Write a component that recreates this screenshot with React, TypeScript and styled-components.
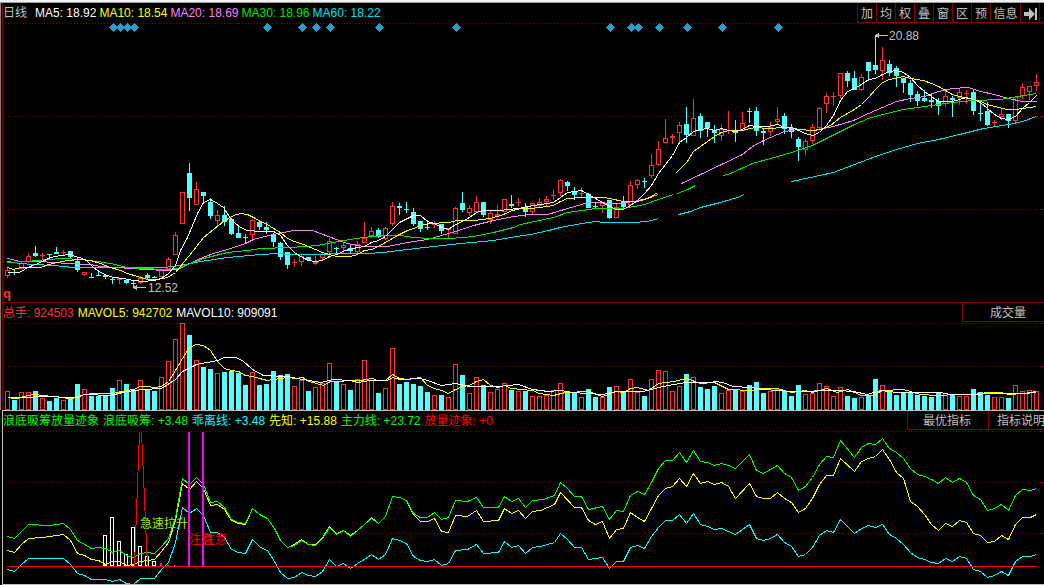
import React from 'react';
import styled, { createGlobalStyle } from 'styled-components';

const C = {
  up: '#ff3232',
  down: '#54ffff',
  frame: '#800000',
  text: '#c0c0c0',
  white: '#ffffff',
  yellow: '#ffff00',
  pink: '#ff80ff',
  green: '#00e600',
  aqua: '#00e1f0',
  lime: '#00ff00',
  cyan: '#00ffff',
  red: '#ff0000',
  magenta: '#ff00ff',
  diamond: '#2d9bc8',
};

const GlobalStyle = createGlobalStyle`
  * { box-sizing: border-box; }
  body {
    margin: 0;
    background: #000;
    color: ${C.text};
    font: 12px/20px "Liberation Sans", "Noto Sans CJK SC", sans-serif;
    overflow-x: hidden;
  }
`;

/* kind, high, body top, body bottom, low, volume top; one entry per trading day */
const DAYS = `
r 267 270 276 278 391|c 270 272 273 275 400|r 262 263 269 269 392|r 253 256 262 263 392|c 246 253 256 257 391
r 253 255 256 259 398|c 254 254 255 258 401|c 247 252 254 254 398|r 250 252 253 255 400|c 251 251 257 258 398
c 257 261 270 272 384|r 272 272 275 276 389|c 273 277 278 278 396|c 271 275 276 276 396|c 274 275 277 279 396
c 278 279 280 284 388|r 278 278 280 284 380|c 280 280 283 284 384|c 281 283 284 288 390|r 276 278 283 284 380
c 273 275 278 279 389|c 276 277 278 278 391|r 269 269 277 279 377|r 257 259 269 271 361|r 232 235 255 255 339
r 192 192 224 224 323|c 163 173 198 211 335|r 182 189 205 205 360|c 192 192 196 202 367|c 198 202 216 219 369
r 210 215 221 227 373|c 206 215 222 226 372|c 218 219 234 235 371|c 225 233 238 238 373|c 234 237 238 243 385
r 219 220 235 239 372|c 220 222 227 230 385|c 222 227 230 234 384|c 233 235 242 247 371|c 242 243 257 260 375
c 252 252 265 269 374|r 259 262 263 267 386|r 254 256 262 266 380|c 257 257 260 260 391|r 256 262 264 265 387
r 252 254 258 260 383|r 238 241 252 258 363|c 247 248 249 254 382|r 242 245 248 253 384|c 245 248 251 254 390
r 241 244 252 254 379|r 222 238 243 243 360|r 227 231 236 238 380|c 228 230 237 238 393|r 227 228 239 240 388
r 202 206 224 226 348|c 203 206 208 215 384|c 202 209 210 213 382|c 208 212 224 226 384|c 221 221 229 232 386
c 220 227 228 230 392|r 221 224 225 228 395|c 224 224 231 234 395|r 228 228 230 238 397|r 207 208 234 234 364
c 192 203 210 212 375|r 205 208 213 216 393|r 196 202 212 212 377|c 202 202 215 217 385|r 211 213 220 224 392
r 205 214 216 217 389|r 199 199 212 212 383|c 195 204 206 208 390|r 198 202 203 206 391|c 203 207 212 217 391
r 203 203 212 214 396|r 198 202 206 208 396|r 196 199 202 206 395|r 190 195 196 200 390|r 179 180 193 196 383
c 181 182 186 191 392|c 187 191 195 200 392|r 187 193 194 198 397|c 193 194 208 208 389|c 202 206 207 208 397
r 202 203 206 213 397|c 200 200 218 219 387|r 204 207 218 218 386|c 196 202 207 208 391|r 181 185 205 206 379
r 179 180 185 189 392|c 178 181 182 188 396|r 154 165 176 178 379|r 141 149 165 166 370|r 119 138 143 143 371
r 134 136 138 144 391|r 122 125 133 142 386|c 107 124 135 143 374|r 99 118 136 136 377|c 113 116 131 138 387
c 122 122 128 137 389|c 125 130 133 143 386|r 124 129 136 141 393|r 111 130 131 134 390|c 120 131 133 142 390
r 112 123 131 131 391|c 108 111 112 123 385|c 107 111 131 136 382|c 128 131 133 145 393|r 122 127 132 136 391
r 107 119 122 124 389|c 113 116 129 134 391|c 124 128 132 138 396|c 137 139 147 161 385|r 139 141 150 155 394
r 124 127 141 144 393|r 107 108 128 129 383|r 93 96 104 113 386|r 92 96 97 106 396|r 73 73 96 98 387
c 71 73 81 87 396|c 71 78 90 90 398|r 74 77 90 91 397|c 62 62 71 81 395|c 35 65 70 74 379
r 47 60 71 80 385|c 60 64 73 76 391|c 66 68 76 87 395|c 78 78 83 93 393|c 80 83 95 102 393
c 91 94 101 106 395|c 90 98 101 102 396|c 95 100 102 108 397|c 98 101 106 115 393|r 89 96 104 107 393
c 96 98 100 117 395|r 88 92 98 105 396|r 90 93 94 104 396|c 89 92 111 115 389|c 103 113 114 121 392
c 102 111 125 126 395|r 120 122 123 127 397|r 108 114 117 120 397|c 114 114 121 128 398|r 96 97 121 122 385
r 83 87 96 99 391|r 86 86 92 100 390|r 74 82 86 91 391`
  .trim()
  .split(/[|\n]/)
  .map((row, i) => {
    const [kind, ...v] = row.trim().split(' ');
    const [high, top, bottom, low, volume] = v.map(Number);
    return { x: 7 + 7 * i, up: kind === 'r', high, top, bottom, low, volume };
  });

const PRICE_LINES: [string, string][] = [
  [C.aqua, '7,261 20,263 33,264 53,265 73,267 100,267 163,267 180,265 200,261 227,257 260,254 277,253 290,254 367,253 383,252 407,249 433,246 460,243 493,240 510,237 530,234 548,230 560,227 581,223 595,221 603,222 632,222 647,221 658,218'],
  [C.aqua, '678,214 690,211 700,207 720,202 737,197 744,194'],
  [C.aqua, '791,181 810,177 833,172 854,164 875,156 896,149 917,143 938,139 959,134 983,128 1008,124 1022,121 1036,116'],
  [C.pink, '7,258 20,261 40,261 53,262 67,263 90,264 100,266 113,267 133,268 143,269 167,270 177,269 187,264 200,258 213,253 227,249 245,243 253,239 260,237 273,234 293,230 312,230 320,233 336,239 347,243 363,246 387,246 407,242 427,239 455,231 473,225 493,220 513,216 530,214 547,214 567,208 581,204 588,202 620,203 633,201 647,198 658,194'],
  [C.pink, '681,183 700,174 721,164 742,154 752,146 763,140 777,134 784,131 798,129 813,130 833,126 853,120 868,113 882,107 896,101 910,98 924,96 938,91 952,88 968,87 980,91 994,94 1008,98 1022,101 1036,101'],
  [C.green, '7,262 27,261 47,259 63,258 80,259 97,261 110,263 127,267 140,268 167,269 177,268 187,264 203,258 227,252 247,250 260,248 290,247 317,245 343,240 363,237 383,235 400,235 413,237 427,238 450,238 473,236 493,232 513,227 520,224 553,217 567,212 595,208 623,208 644,204 658,199 673,194'],
  [C.green, '677,193 687,189 695,185'],
  [C.green, '723,175 730,173 752,163 770,158 791,152 812,145 826,138 840,131 854,124 868,118 882,114 903,109 924,106 952,102 973,100 1000,99 1017,96 1036,93'],
  [C.yellow, '7,267 13,269 20,267 40,267 48,264 57,262 67,260 80,259 90,260 100,263 110,267 120,270 127,273 137,276 147,279 157,279 167,277 175,272 183,262 193,250 203,237 213,229 223,221 233,215 240,213 247,214 253,217 260,221 267,224 273,228 280,232 287,238 294,241 303,244 315,249 322,252 329,254 336,256 350,256 357,254 364,250 371,249 378,246 385,242 392,238 399,234 407,230 413,228 420,225 430,223 448,222 457,220 473,220 490,218 503,214 512,210 520,208 530,208 547,206 553,205 560,201 567,198 581,197 603,197 609,198 623,201 637,201 647,198 651,196 657,192'],
  [C.yellow, '675,173 687,161 693,151 700,146 707,141 714,136 721,132 728,130 742,130 749,128 756,127 767,128 784,127 791,127 798,129 813,130 820,129 830,125 840,117 847,113 854,109 861,104 868,97 875,89 882,82 889,79 903,76 910,78 923,80 931,83 938,86 945,90 952,94 959,96 973,99 980,101 987,104 994,106 1007,109 1015,109 1022,108 1036,106'],
  [C.white, '7,272 18,272 21,271 27,267 35,264 42,261 50,257 60,255 70,254 75,256 82,258 87,261 93,267 100,272 107,275 113,277 123,278 133,280 143,281 153,280 161,278 168,273 175,265 180,250 187,237 197,213 203,202 210,199 217,203 223,207 230,218 235,223 240,227 247,230 260,231 273,231 280,235 287,245 294,252 302,257 308,260 315,261 322,260 329,256 336,254 345,250 357,247 364,246 371,242 378,240 385,236 392,229 399,222 407,218 413,215 420,215 427,221 434,223 441,227 448,229 455,224 462,221 469,217 476,212 483,210 500,210 508,209 518,208 527,206 540,204 553,202 560,197 567,192 574,191 581,190 588,194 595,198 602,202 609,206 616,209 623,209 630,205 637,200 644,193 651,185 658,173 665,164 672,155 679,142 686,137 693,131 700,129 707,128 714,130 721,128 728,130 735,131 742,129 749,125 756,126 767,126 777,124 784,127 791,127 798,130 805,133 812,135 819,132 826,125 833,115 840,100 847,91 854,88 861,84 868,79 875,78 882,74 889,71 896,70 903,72 910,77 917,85 924,91 931,96 938,101 952,101 959,99 966,97 973,99 980,102 987,108 994,114 1001,118 1008,119 1015,116 1022,108 1029,102 1036,95'],
];

const VOLUME_LINES: [string, string][] = [
  [C.yellow, '10,398 17,398 27,395 35,394 42,395 63,397 70,399 77,396 84,394 93,393 112,393 126,390 133,389 140,386 147,386 154,387 161,386 168,381 175,370 182,358 189,347 196,344 203,345 210,350 217,361 224,368 231,370 238,371 245,375 252,376 259,378 267,380 273,379 287,377 295,378 302,377 309,381 316,383 323,385 330,381 337,381 350,380 360,380 372,378 377,380 385,380 392,374 399,378 407,379 420,377 427,385 434,388 441,390 448,393 455,389 462,386 469,385 476,381 483,379 490,385 498,387 504,385 511,388 532,390 539,393 553,395 565,392 588,391 602,396 616,391 623,392 630,388 637,387 648,390 658,383 673,381 686,378 700,383 714,382 728,389 750,390 763,388 777,388 791,392 805,390 812,392 826,388 837,392 847,389 861,395 872,395 882,390 903,389 920,394 937,395 957,394 973,394 987,392 1001,392 1008,394 1023,393 1036,391'],
  [C.white, '7,397 27,397 40,396 77,397 84,394 110,395 126,391 143,389 161,388 175,379 182,371 196,364 217,360 224,357 235,357 242,360 252,369 263,375 287,376 302,379 320,382 333,379 350,380 357,382 370,380 387,380 392,377 399,379 420,378 427,380 441,385 455,383 469,386 498,386 518,384 532,389 548,391 560,390 572,392 602,394 616,391 643,391 658,387 673,384 686,382 710,382 715,381 722,382 733,386 750,387 763,389 791,391 837,390 853,391 867,394 880,390 897,392 940,392 950,394 977,394 987,393 1023,393 1036,392'],
];

const TREND_LINES: [string, string][] = [
  [C.yellow, '7,550 14,552 21,544 28,538 42,537 63,534 70,540 77,553 84,555 91,559 98,560 105,564 112,561 119,561 126,565 133,564 140,561 154,559 161,551 168,542 175,520 182,483 189,489 196,481 203,488 210,505 217,504 224,509 231,520 238,523 245,524 252,508 259,514 267,518 274,528 280,540 287,547 294,544 301,539 308,544 315,544 322,537 329,526 336,533 343,530 350,535 357,530 364,524 371,517 378,523 385,516 392,496 399,497 406,500 413,514 420,521 427,521 434,518 441,531 448,532 455,515 467,516 476,510 483,521 498,520 504,508 511,513 518,510 525,518 532,511 540,510 547,507 554,504 560,492 574,507 581,507 588,520 595,524 602,521 609,538 616,529 623,528 630,512 637,517 644,521 651,508 658,495 665,488 672,486 679,478 686,486 693,473 700,483 707,481 714,484 721,482 728,486 735,498 749,483 756,496 763,498 770,498 777,492 784,498 791,502 798,512 805,508 812,498 819,484 826,475 833,475 840,458 854,471 861,461 868,458 875,456 882,449 889,459 896,472 903,478 910,501 917,506 924,514 931,524 938,530 945,523 952,526 959,520 966,522 973,533 980,535 987,542 994,541 1001,535 1008,539 1015,524 1022,517 1030,517 1036,514'],
  [C.lime, '7,536 14,538 21,531 28,524 49,525 63,523 70,529 77,540 84,544 91,548 98,547 105,548 112,552 119,550 126,555 133,557 140,553 147,552 154,553 161,546 168,538 175,517 182,478 189,484 196,477 203,484 210,502 217,501 224,507 231,519 238,522 245,523 252,508 259,514 267,518 274,528 280,540 287,547 294,545 301,540 308,544 315,545 322,538 329,527 336,534 343,530 350,536 357,530 364,524 371,518 378,523 385,516 392,496 399,497 406,500 413,513 420,517 427,517 434,512 441,519 448,517 455,500 467,501 476,497 483,507 498,507 504,496 511,501 518,498 525,507 532,500 543,499 554,495 560,482 567,488 574,496 581,496 588,509 602,506 609,519 616,510 623,511 630,495 637,491 644,494 651,482 658,468 665,460 672,460 679,452 686,462 693,450 700,461 707,462 714,465 721,463 728,465 735,468 749,454 756,470 763,473 770,469 777,465 784,473 791,477 798,490 805,486 812,477 819,464 826,456 833,457 840,440 854,457 861,447 868,443 875,444 882,438 889,448 896,452 903,458 910,468 917,474 924,476 931,479 938,483 945,477 952,482 959,478 966,482 973,495 980,499 987,510 994,508 1001,504 1008,510 1015,495 1022,489 1030,490 1036,488'],
  [C.cyan, '7,569 14,571 21,564 28,558 63,558 70,564 77,573 84,575 91,579 105,579 112,581 119,579 126,583 133,584 140,578 154,578 161,569 168,562 175,542 182,507 189,513 196,508 203,515 210,532 217,532 224,537 231,549 238,552 245,553 252,539 260,547 267,550 274,561 280,572 287,578 294,577 301,572 308,575 315,576 322,571 329,559 336,566 343,563 350,568 357,563 364,559 371,554 378,559 385,554 392,538 399,540 406,543 413,556 420,560 427,561 434,559 441,565 448,563 455,550 467,549 476,544 483,553 498,552 504,541 511,547 518,545 525,553 532,547 540,546 554,542 560,533 567,539 574,547 581,547 588,559 602,557 609,568 616,561 623,561 630,547 637,545 644,548 651,536 658,527 665,520 672,520 679,514 686,523 693,513 700,524 707,526 714,529 721,528 735,534 749,524 756,538 763,540 770,538 777,534 784,542 791,546 798,556 805,554 812,547 819,535 826,530 833,532 840,519 854,533 861,528 868,525 875,527 882,524 889,534 896,538 903,544 910,552 917,557 924,559 931,562 938,563 945,558 952,561 959,556 966,558 973,569 980,571 987,577 994,575 1001,571 1008,575 1015,561 1022,556 1030,556 1036,554'],
];

const DIAMONDS = [113, 120, 127, 134, 267, 302, 316, 330, 379, 456, 610, 631, 638, 659, 687, 722, 778];

/* left edge and top of each accumulation bar */
const BARS = [
  [105, 535], [112, 517], [119, 541], [126, 554], [133, 527], [140, 546], [147, 556], [154, 561],
];

const Page = styled.main`
  display: flex;
  flex-direction: column;
  overflow: hidden;
`;

const TopStrip = styled.div`
  height: 3px;
  background: #f0f0f0;
  border-bottom: 1px solid #a0a0a0;
`;

const Panel = styled.section<{ $rail: string }>`
  padding-left: 1px;
  border-left: 1px solid ${p => p.$rail};
`;

const PanelBody = styled.div<{ $edge: string; $closed?: boolean }>`
  border-left: 1px solid ${p => p.$edge};
  border-bottom: ${p => (p.$closed ? `1px solid ${p.$edge}` : '0')};
`;

const Header = styled.header<{ $rule?: string }>`
  display: flex;
  height: 20px;
  border-top: ${p => (p.$rule ? `1px solid ${p.$rule}` : '0')};
`;

const Legend = styled.div<{ $gap: number }>`
  display: flex;
  gap: ${p => p.$gap}px;
  white-space: nowrap;
`;

const Label = styled.span<{ $c?: string; $space?: boolean }>`
  color: ${p => p.$c ?? C.text};
  margin-right: ${p => (p.$space ? '5px' : '0')};
`;

const Tools = styled.nav`
  display: flex;
  flex: none;
  margin-left: auto;
`;

const Tool = styled.button<{ $w: number; $pad?: number }>`
  flex: none;
  display: flex;
  align-items: center;
  justify-content: ${p => (p.$pad ? 'flex-start' : 'center')};
  width: ${p => p.$w}px;
  height: 100%;
  padding: 2px 0 0 ${p => p.$pad ?? 0}px;
  border: 0 solid ${C.frame};
  border-width: 0 0 1px 1px;
  background: #000;
  color: ${C.text};
  font: inherit;
  white-space: nowrap;
  overflow: hidden;
`;

const Plot = styled.svg<{ $h: number }>`
  display: block;
  width: 100%;
  height: ${p => p.$h}px;
  shape-rendering: crispEdges;
  font: 12px "Liberation Sans", "Noto Sans CJK SC", sans-serif;
`;

const LEFT = 3;

function Chart({ top, height, grid, label, children }: {
  top: number; height: number; grid: number[]; label: string; children: React.ReactNode;
}) {
  return (
    <Plot $h={height} role="img" aria-label={label}>
      {grid.map(y => (
        <line key={y} x1="2" x2="100%" y1={y - top + 0.5} y2={y - top + 0.5} stroke={C.frame} strokeDasharray="1 2" />
      ))}
      <g transform={`translate(${-LEFT} ${-top})`}>{children}</g>
    </Plot>
  );
}

function Lines({ data }: { data: [string, string][] }) {
  return (
    <g transform="translate(0.5 0.5)" fill="none">
      {data.map(([color, points], i) => (
        <polyline key={i} points={points} stroke={color} />
      ))}
    </g>
  );
}

function Box({ x, top, bottom, up }: { x: number; top: number; bottom: number; up: boolean }) {
  if (up && bottom - top > 2) {
    return <rect x={x - 1.5} y={top + 0.5} width="4" height={bottom - top - 1} fill="#000" stroke={C.up} />;
  }
  return <rect x={x - 2} y={top} width="5" height={bottom - top} fill={up ? C.up : C.down} />;
}

export default function App() {
  return (
    <>
      <GlobalStyle />
      <Page>
        <TopStrip />

        <Panel $rail="#808080">
          <PanelBody $edge={C.frame}>
            <Header>
              <Legend $gap={3}>
                <Label $space>日线</Label>
                <Label $c={C.white}>MA5: 18.92</Label>
                <Label $c={C.yellow}>MA10: 18.54</Label>
                <Label $c={C.pink}>MA20: 18.69</Label>
                <Label $c={C.green}>MA30: 18.96</Label>
                <Label $c={C.aqua}>MA60: 18.22</Label>
              </Legend>
              <Tools>
                {['加', '均', '权', '叠', '窗', '区', '预'].map(t => (
                  <Tool key={t} $w={19}>{t}</Tool>
                ))}
                <Tool $w={30}>信息</Tool>
                <Tool $w={19} aria-label="Next">
                  <svg width="13" height="12" viewBox="0 0 13 12" fill={C.text}>
                    <path d="M0 4h5V0l6 6-6 6V8H0zM11 0h2v12h-2z" />
                  </svg>
                </Tool>
                <Tool $w={5} aria-label="More" />
              </Tools>
            </Header>
            <Chart top={23} height={279} grid={[23, 116, 209]} label="Daily candles with moving averages">
              {DIAMONDS.map(x => (
                <path key={x} d={`M${x + 0.5} 23l4.500 4.500-4.500 4.500-4.500-4.500z`} fill={C.diamond} />
              ))}
              {DAYS.map(d => (
                <g key={d.x}>
                  <rect x={d.x} y={d.high} width="1" height={d.low - d.high} fill={d.up ? C.up : C.down} />
                  <Box x={d.x} top={d.top} bottom={d.bottom} up={d.up} />
                </g>
              ))}
              <Lines data={PRICE_LINES} />
              <g fill={C.text}>
                <path d="M134 287h12v1h-12zM133 287.500l4-3v6z" />
                <text x="148" y="292">12.52</text>
                <path d="M876 35h12v1h-12zM875 35.500l4-3v6z" />
                <text x="889" y="40">20.88</text>
              </g>
              <text x="3" y="298" fill={C.up} fontSize="13" fontWeight="bold">q</text>
            </Chart>
          </PanelBody>
        </Panel>

        <Panel $rail="#808080">
          <PanelBody $edge={C.frame}>
            <Header $rule={C.frame}>
              <Legend $gap={4}>
                <Label $c={C.up}>总手: 924503</Label>
                <Label $c={C.yellow}>MAVOL5: 942702</Label>
                <Label $c={C.white}>MAVOL10: 909091</Label>
              </Legend>
              <Tools>
                <Tool $w={82} $pad={27}>成交量</Tool>
              </Tools>
            </Header>
            <Chart top={322} height={88} grid={[323, 366]} label="Volume">
              {DAYS.map(d => (
                <Box key={d.x} x={d.x} top={d.volume} bottom={410} up={d.up} />
              ))}
              <Lines data={VOLUME_LINES} />
            </Chart>
          </PanelBody>
        </Panel>

        <Panel $rail="#000">
          <PanelBody $edge={C.text} $closed>
            <Header $rule={C.text}>
              <Legend $gap={4}>
                <Label $c={C.lime}>浪底吸筹放量迹象</Label>
                <Label $c={C.lime}>浪底吸筹: +3.48</Label>
                <Label $c={C.cyan}>乖离线: +3.48</Label>
                <Label $c={C.yellow}>先知: +15.88</Label>
                <Label $c={C.lime}>主力线: +23.72</Label>
                <Label $c={C.red}>放量迹象: +0</Label>
              </Legend>
              <Tools>
                <Tool $w={81} $pad={15}>最优指标</Tool>
                <Tool $w={56} $pad={8}>指标说明</Tool>
              </Tools>
            </Header>
            <Chart top={430} height={154} grid={[431, 482, 533]} label="Accumulation indicator">
              <g fill="none" stroke={C.white}>
                {BARS.map(([x, y]) => (
                  <rect key={x} x={x - 1.5} y={y + 0.5} width="3" height={565 - y} />
                ))}
              </g>
              <text x="140" y="528" fill="#a8f000">急速拉升</text>
              <Lines data={TREND_LINES} />
              <g fill={C.magenta}>
                <rect x="188" y="432" width="2" height="134" />
                <rect x="202" y="432" width="2" height="134" />
                <rect x="160" y="563" width="2" height="3" />
                <rect x="167" y="565" width="2" height="1" />
                <rect x="174" y="565" width="2" height="1" />
              </g>
              <g fill={C.red}>
                <text x="189" y="544">注意</text>
                <text x="203" y="544">注意</text>
              </g>
              <path d="M134.500 566L139.500 432M141.500 432L147.500 566" stroke={C.red} />
              <rect x="7" y="566" width="1030" height="1" fill={C.red} />
            </Chart>
          </PanelBody>
        </Panel>
      </Page>
    </>
  );
}
